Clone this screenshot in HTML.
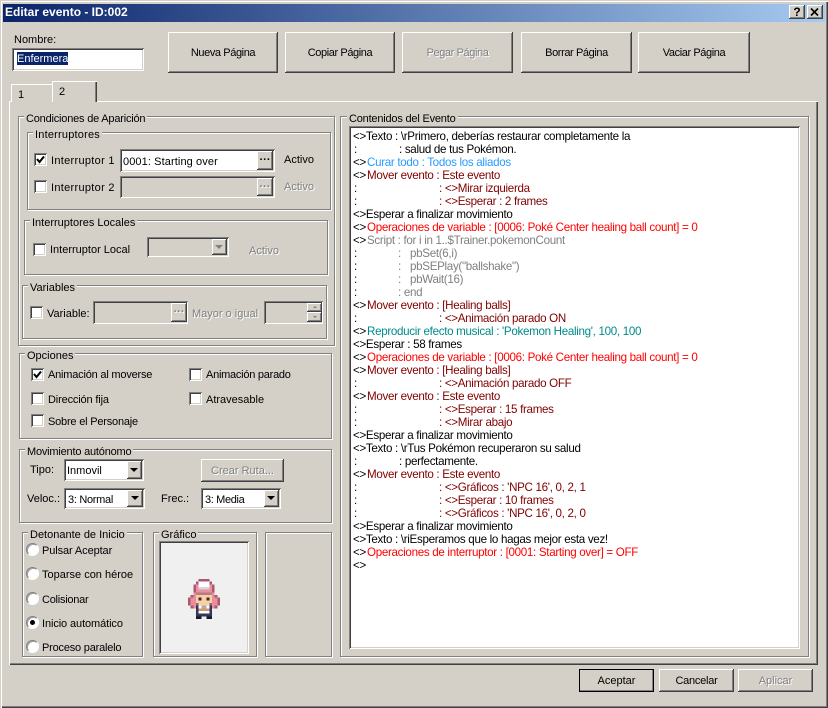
<!DOCTYPE html>
<html><head><meta charset="utf-8"><style>
html,body{margin:0;padding:0;background:#d4d0c8}
#w{position:relative;width:828px;height:708px;overflow:hidden;background:#d4d0c8;font:11px/14px "Liberation Sans",sans-serif;color:#000}
#w div,#w span.a{position:absolute}
.t{white-space:nowrap;margin-top:1px}
.n{letter-spacing:-.2px}
.d{color:#808080;text-shadow:1px 1px 0 #fff}
.b{background:#d4d0c8;box-sizing:border-box;padding-top:1px;box-shadow:inset -1px -1px #404040,inset 1px 1px #fff,inset -2px -2px #808080,inset 2px 2px #d4d0c8;text-align:center;white-space:nowrap}
.p{letter-spacing:-.4px}
.s{box-shadow:inset 1px 1px #808080,inset -1px -1px #fff,inset 2px 2px #404040,inset -2px -2px #d4d0c8;background:#fff}
.g{border:1px solid #808080;box-shadow:1px 1px 0 #fff,inset 1px 1px 0 #fff;box-sizing:border-box}
.l{background:#d4d0c8;padding:1px 2px 0;white-space:nowrap}
.c{width:13px;height:13px;background:#fff;box-shadow:inset 1px 1px #808080,inset -1px -1px #fff,inset 2px 2px #404040,inset -2px -2px #d4d0c8}
.ar{width:0;height:0;border-left:4px solid transparent;border-right:4px solid transparent;border-top:4px solid #000}
.r{width:11px;height:11px;border-radius:50%;background:#fff;border:1px solid;border-color:#808080 #fff #fff #808080;box-shadow:inset 1px 1px 0 #a0a0a0}
.e{left:352px;width:445px;height:13px;overflow:hidden;white-space:nowrap;line-height:13px;font-size:11.6px;letter-spacing:-.31px}
.e i{font-style:normal;position:absolute;top:0}
.k{color:#000}.m{color:#800000}.o{color:#ff0000}.y{color:#808080}.u{color:#2a9bff}.q{color:#008a8a}
</style></head><body><div id="w">
<div style="left:0;top:0;width:828px;height:708px;box-sizing:border-box;box-shadow:inset 1px 1px #d4d0c8,inset 2px 2px #fff,inset -1px -1px #404040,inset -2px -2px #808080"></div>
<div style="left:3px;top:4px;width:822px;height:18px;background:linear-gradient(90deg,#0a246a,#a6caf0)"></div>
<div class="t" style="left:5px;top:5px;margin-top:0;color:#fff;font-weight:bold;font-size:12px;line-height:15px">Editar evento - ID:002</div>
<div class="b" style="left:789px;top:5px;width:16px;height:14px;padding:0;font:bold 12px/14px 'Liberation Sans',sans-serif">?</div>
<div class="b" style="left:807px;top:5px;width:16px;height:14px;padding:0"><svg width="16" height="14" style="display:block"><path d="M4 3.5L11 10.500M11 3.500L4 10.500" stroke="#000" stroke-width="1.600"/></svg></div>

<div class="t" style="left:14px;top:32px">Nombre:</div>
<div class="s" style="left:12px;top:48px;width:132px;height:23px"></div>
<div class="t" style="left:17px;top:52px;margin-top:0;width:51px;height:13px;overflow:hidden;background:#0a246a;color:#fff;line-height:15px">Enfermera</div>

<div class="b p" style="left:168px;top:32px;width:110px;height:41px;line-height:41px">Nueva Página</div>
<div class="b p" style="left:285px;top:32px;width:110px;height:41px;line-height:41px">Copiar Página</div>
<div class="b d p" style="left:402px;top:32px;width:111px;height:41px;line-height:41px">Pegar Página</div>
<div class="b p" style="left:521px;top:32px;width:111px;height:41px;line-height:41px">Borrar Página</div>
<div class="b p" style="left:638px;top:32px;width:112px;height:41px;line-height:41px">Vaciar Página</div>

<!-- tab pane -->
<div style="left:9px;top:101px;width:809px;height:564px;box-shadow:inset 1px 1px #fff,inset -1px -1px #404040,inset -2px -2px #808080"></div>
<div style="left:11px;top:84px;width:41px;height:18px;background:#d4d0c8;box-shadow:inset 1px 1px #fff"></div>
<div class="t" style="left:18px;top:87px">1</div>
<div style="left:52px;top:81px;width:45px;height:21px;background:#d4d0c8;box-shadow:inset 1px 1px #fff,inset -1px 0 #404040,inset -2px 0 #808080"></div>
<div class="t" style="left:59px;top:84px">2</div>

<!-- groups -->
<div class="g" style="left:18px;top:116px;width:317px;height:230px"></div>
<div class="l n" style="left:24px;top:111px">Condiciones de Aparición</div>
<div class="g" style="left:27px;top:132px;width:304px;height:78px"></div>
<div class="l" style="left:33px;top:127px;letter-spacing:.2px">Interruptores</div>
<div class="c" style="left:34px;top:153px"><svg width="13" height="13" style="display:block"><path d="M3 6L5.500 9L10 3.500" stroke="#000" stroke-width="2" fill="none"/></svg></div>
<div class="t" style="left:51px;top:153px;letter-spacing:.3px">Interruptor 1</div>
<div class="s" style="left:120px;top:149px;width:155px;height:23px"></div>
<div class="t" style="left:123px;top:154px;letter-spacing:.1px">0001: Starting over</div>
<div class="b" style="left:257px;top:151px;width:16px;height:19px;padding:0;font-weight:bold;line-height:18px">···</div>
<div class="t" style="left:284px;top:152px">Activo</div>
<div class="c" style="left:34px;top:180px"></div>
<div class="t" style="left:51px;top:180px;letter-spacing:.3px">Interruptor 2</div>
<div class="s" style="left:120px;top:176px;width:155px;height:22px;background:#d4d0c8"></div>
<div class="b d" style="left:257px;top:178px;width:16px;height:18px;padding:0;font-weight:bold;line-height:18px">···</div>
<div class="t d" style="left:284px;top:179px">Activo</div>

<div class="g" style="left:24px;top:220px;width:304px;height:55px"></div>
<div class="l" style="left:30px;top:215px">Interruptores Locales</div>
<div class="c" style="left:33px;top:243px"></div>
<div class="t" style="left:50px;top:242px">Interruptor Local</div>
<div class="s" style="left:147px;top:237px;width:82px;height:20px;background:#d4d0c8"></div>
<div class="b" style="left:212px;top:239px;width:15px;height:16px"><span class="a ar" style="left:3px;top:6px;border-top-color:#808080"></span></div>
<div class="t d" style="left:249px;top:243px">Activo</div>

<div class="g" style="left:22px;top:285px;width:305px;height:54px"></div>
<div class="l" style="left:28px;top:280px">Variables</div>
<div class="c" style="left:30px;top:306px"></div>
<div class="t" style="left:47px;top:306px">Variable:</div>
<div class="s" style="left:93px;top:301px;width:95px;height:23px;background:#d4d0c8"></div>
<div class="b d" style="left:171px;top:303px;width:16px;height:19px;padding:0;font-weight:bold;line-height:18px">···</div>
<div class="t d" style="left:192px;top:306px">Mayor o igual</div>
<div class="s" style="left:264px;top:301px;width:59px;height:23px;background:#d4d0c8"></div>
<div class="b" style="left:307px;top:303px;width:15px;height:9px"><span class="a" style="left:6px;top:3px;width:0;height:0;border-left:2px solid transparent;border-right:2px solid transparent;border-bottom:2px solid #808080"></span></div>
<div class="b" style="left:307px;top:312px;width:15px;height:10px"><span class="a" style="left:6px;top:4px;width:0;height:0;border-left:2px solid transparent;border-right:2px solid transparent;border-top:2px solid #808080"></span></div>

<div class="g" style="left:19px;top:353px;width:313px;height:86px"></div>
<div class="l" style="left:25px;top:348px">Opciones</div>
<div class="c" style="left:31px;top:368px"><svg width="13" height="13" style="display:block"><path d="M3 6L5.500 9L10 3.500" stroke="#000" stroke-width="2" fill="none"/></svg></div>
<div class="t n" style="left:48px;top:367px">Animación al moverse</div>
<div class="c" style="left:189px;top:368px"></div>
<div class="t" style="left:206px;top:367px;letter-spacing:-.25px">Animación parado</div>
<div class="c" style="left:31px;top:392px"></div>
<div class="t" style="left:48px;top:392px;letter-spacing:-.15px">Dirección fija</div>
<div class="c" style="left:189px;top:392px"></div>
<div class="t" style="left:206px;top:392px">Atravesable</div>
<div class="c" style="left:31px;top:414px"></div>
<div class="t n" style="left:48px;top:414px">Sobre el Personaje</div>

<div class="g" style="left:19px;top:449px;width:313px;height:74px"></div>
<div class="l n" style="left:25px;top:444px">Movimiento autónomo</div>
<div class="t" style="left:30px;top:462px">Tipo:</div>
<div class="s" style="left:64px;top:459px;width:80px;height:22px"></div>
<div class="t" style="left:67px;top:463px">Inmovil</div>
<div class="b" style="left:127px;top:461px;width:15px;height:18px"><span class="a ar" style="left:3px;top:7px"></span></div>
<div class="b d" style="left:201px;top:459px;width:83px;height:23px;line-height:23px">Crear Ruta...</div>
<div class="t" style="left:27px;top:491px">Veloc.:</div>
<div class="s" style="left:64px;top:488px;width:81px;height:21px"></div>
<div class="t" style="left:68px;top:492px;letter-spacing:-.3px">3: Normal</div>
<div class="b" style="left:127px;top:490px;width:16px;height:17px"><span class="a ar" style="left:4px;top:6px"></span></div>
<div class="t" style="left:161px;top:491px">Frec.:</div>
<div class="s" style="left:201px;top:488px;width:80px;height:21px"></div>
<div class="t" style="left:205px;top:492px;letter-spacing:-.35px">3: Media</div>
<div class="b" style="left:264px;top:490px;width:15px;height:17px"><span class="a ar" style="left:3px;top:6px"></span></div>

<div class="g" style="left:22px;top:532px;width:121px;height:125px"></div>
<div class="l" style="left:28px;top:527px">Detonante de Inicio</div>
<div class="r" style="left:26px;top:543px"></div><div class="t" style="left:42px;top:543px;letter-spacing:-.1px">Pulsar Aceptar</div>
<div class="r" style="left:26px;top:567px"></div><div class="t" style="left:42px;top:567px">Toparse con héroe</div>
<div class="r" style="left:26px;top:592px"></div><div class="t" style="left:42px;top:592px;letter-spacing:-.25px">Colisionar</div>
<div class="r" style="left:26px;top:616px"></div><div class="t" style="left:42px;top:616px;letter-spacing:-.1px">Inicio automático</div>
<div style="left:30px;top:620px;width:5px;height:5px;background:#000;border-radius:50%"></div>
<div class="r" style="left:26px;top:640px"></div><div class="t" style="left:42px;top:640px;letter-spacing:-.2px">Proceso paralelo</div>

<div class="g" style="left:153px;top:532px;width:104px;height:125px"></div>
<div class="l" style="left:159px;top:527px">Gráfico</div>
<div class="s" style="left:159px;top:541px;width:90px;height:113px;background:#f0f0f0"></div>
<svg style="position:absolute;left:188px;top:579px" width="32" height="40" viewBox="0 0 12 15" shape-rendering="crispEdges">
<g fill="#e8909c"><rect x="3" y="1" width="6" height="4"/><rect x="2" y="2" width="8" height="4"/><rect x="1" y="6" width="10" height="2"/><rect x="0" y="7" width="12" height="3"/><rect x="1" y="10" width="10" height="1"/></g>
<g fill="#a85870"><rect x="4" y="0" width="4" height="1"/><rect x="3" y="1" width="1" height="1"/><rect x="8" y="1" width="1" height="1"/><rect x="2" y="2" width="1" height="3"/><rect x="9" y="2" width="1" height="3"/><rect x="1" y="6" width="1" height="1"/><rect x="10" y="6" width="1" height="1"/><rect x="0" y="7" width="1" height="3"/><rect x="11" y="7" width="1" height="3"/><rect x="1" y="10" width="1" height="1"/><rect x="10" y="10" width="1" height="1"/></g>
<rect x="4" y="1" width="4" height="2" fill="#fff"/><rect x="4" y="3" width="4" height="1" fill="#d8d4e4"/>
<rect x="3" y="5" width="6" height="1" fill="#c07880"/>
<rect x="3" y="6" width="6" height="3" fill="#f8d0a8"/>
<rect x="4" y="7" width="1" height="1" fill="#402830"/><rect x="7" y="7" width="1" height="1" fill="#402830"/>
<rect x="4" y="9" width="4" height="1" fill="#f8d0a8"/>
<rect x="3" y="9" width="1" height="1" fill="#a85870"/><rect x="8" y="9" width="1" height="1" fill="#a85870"/>
<rect x="3" y="10" width="6" height="3" fill="#fff"/>
<rect x="5" y="10" width="2" height="1" fill="#b8a8a0"/>
<rect x="4" y="11" width="4" height="1" fill="#d09870"/>
<g fill="#30385c"><rect x="3" y="10" width="1" height="3"/><rect x="8" y="10" width="1" height="3"/><rect x="3" y="13" width="6" height="1"/></g>
<g fill="#181820"><rect x="3" y="14" width="2" height="1"/><rect x="7" y="14" width="2" height="1"/></g>
</svg>
<div class="g" style="left:265px;top:532px;width:67px;height:125px"></div>

<div class="g" style="left:340px;top:116px;width:469px;height:541px"></div>
<div class="l n" style="left:347px;top:111px">Contenidos del Evento</div>
<div class="s" style="left:349px;top:126px;width:451px;height:523px"></div>

<div class="e k" style="top:130px"><i style="left:1px">&lt;&gt;Texto : \rPrimero, deberías restaurar completamente la</i></div>
<div class="e k" style="top:143px"><i style="left:2px">:</i><i style="left:47px">: salud de tus Pokémon.</i></div>
<div class="e u" style="top:156px"><i class="k" style="left:1px">&lt;&gt;</i><i style="left:15px">Curar todo : Todos los aliados</i></div>
<div class="e m" style="top:169px"><i class="k" style="left:1px">&lt;&gt;</i><i style="left:15px">Mover evento : Este evento</i></div>
<div class="e m" style="top:182px"><i class="k" style="left:2px">:</i><i style="left:87px">: &lt;&gt;Mirar izquierda</i></div>
<div class="e m" style="top:195px"><i class="k" style="left:2px">:</i><i style="left:87px">: &lt;&gt;Esperar : 2 frames</i></div>
<div class="e k" style="top:208px"><i style="left:1px">&lt;&gt;Esperar a finalizar movimiento</i></div>
<div class="e o" style="top:221px"><i class="k" style="left:1px">&lt;&gt;</i><i style="left:15px">Operaciones de variable : [0006: Poké Center healing ball count] = 0</i></div>
<div class="e y" style="top:234px"><i class="k" style="left:1px">&lt;&gt;</i><i style="left:15px">Script : for i in 1..$Trainer.pokemonCount</i></div>
<div class="e y" style="top:247px"><i class="k" style="left:2px">:</i><i style="left:46px">:</i><i style="left:58px">pbSet(6,i)</i></div>
<div class="e y" style="top:260px"><i class="k" style="left:2px">:</i><i style="left:46px">:</i><i style="left:58px">pbSEPlay("ballshake")</i></div>
<div class="e y" style="top:273px"><i class="k" style="left:2px">:</i><i style="left:46px">:</i><i style="left:58px">pbWait(16)</i></div>
<div class="e y" style="top:286px"><i class="k" style="left:2px">:</i><i style="left:46px">: end</i></div>
<div class="e m" style="top:299px"><i class="k" style="left:1px">&lt;&gt;</i><i style="left:15px">Mover evento : [Healing balls]</i></div>
<div class="e m" style="top:312px"><i class="k" style="left:2px">:</i><i style="left:87px">: &lt;&gt;Animación parado ON</i></div>
<div class="e q" style="top:325px"><i class="k" style="left:1px">&lt;&gt;</i><i style="left:15px">Reproducir efecto musical : 'Pokemon Healing', 100, 100</i></div>
<div class="e k" style="top:338px"><i style="left:1px">&lt;&gt;Esperar : 58 frames</i></div>
<div class="e o" style="top:351px"><i class="k" style="left:1px">&lt;&gt;</i><i style="left:15px">Operaciones de variable : [0006: Poké Center healing ball count] = 0</i></div>
<div class="e m" style="top:364px"><i class="k" style="left:1px">&lt;&gt;</i><i style="left:15px">Mover evento : [Healing balls]</i></div>
<div class="e m" style="top:377px"><i class="k" style="left:2px">:</i><i style="left:87px">: &lt;&gt;Animación parado OFF</i></div>
<div class="e m" style="top:390px"><i class="k" style="left:1px">&lt;&gt;</i><i style="left:15px">Mover evento : Este evento</i></div>
<div class="e m" style="top:403px"><i class="k" style="left:2px">:</i><i style="left:87px">: &lt;&gt;Esperar : 15 frames</i></div>
<div class="e m" style="top:416px"><i class="k" style="left:2px">:</i><i style="left:87px">: &lt;&gt;Mirar abajo</i></div>
<div class="e k" style="top:429px"><i style="left:1px">&lt;&gt;Esperar a finalizar movimiento</i></div>
<div class="e k" style="top:442px"><i style="left:1px">&lt;&gt;Texto : \rTus Pokémon recuperaron su salud</i></div>
<div class="e k" style="top:455px"><i style="left:2px">:</i><i style="left:47px">: perfectamente.</i></div>
<div class="e m" style="top:468px"><i class="k" style="left:1px">&lt;&gt;</i><i style="left:15px">Mover evento : Este evento</i></div>
<div class="e m" style="top:481px"><i class="k" style="left:2px">:</i><i style="left:87px">: &lt;&gt;Gráficos : 'NPC 16', 0, 2, 1</i></div>
<div class="e m" style="top:494px"><i class="k" style="left:2px">:</i><i style="left:87px">: &lt;&gt;Esperar : 10 frames</i></div>
<div class="e m" style="top:507px"><i class="k" style="left:2px">:</i><i style="left:87px">: &lt;&gt;Gráficos : 'NPC 16', 0, 2, 0</i></div>
<div class="e k" style="top:520px"><i style="left:1px">&lt;&gt;Esperar a finalizar movimiento</i></div>
<div class="e k" style="top:533px"><i style="left:1px">&lt;&gt;Texto : \riEsperamos que lo hagas mejor esta vez!</i></div>
<div class="e o" style="top:546px"><i class="k" style="left:1px">&lt;&gt;</i><i style="left:15px">Operaciones de interruptor : [0001: Starting over] = OFF</i></div>
<div class="e k" style="top:559px"><i style="left:1px">&lt;&gt;</i></div>

<div class="b" style="left:579px;top:669px;width:75px;height:23px;line-height:23px;outline:1px solid #000;outline-offset:-1px">Aceptar</div>
<div class="b" style="left:659px;top:669px;width:75px;height:23px;line-height:23px;letter-spacing:-.25px">Cancelar</div>
<div class="b d" style="left:738px;top:669px;width:75px;height:23px;line-height:23px">Aplicar</div>
</div></body></html>
